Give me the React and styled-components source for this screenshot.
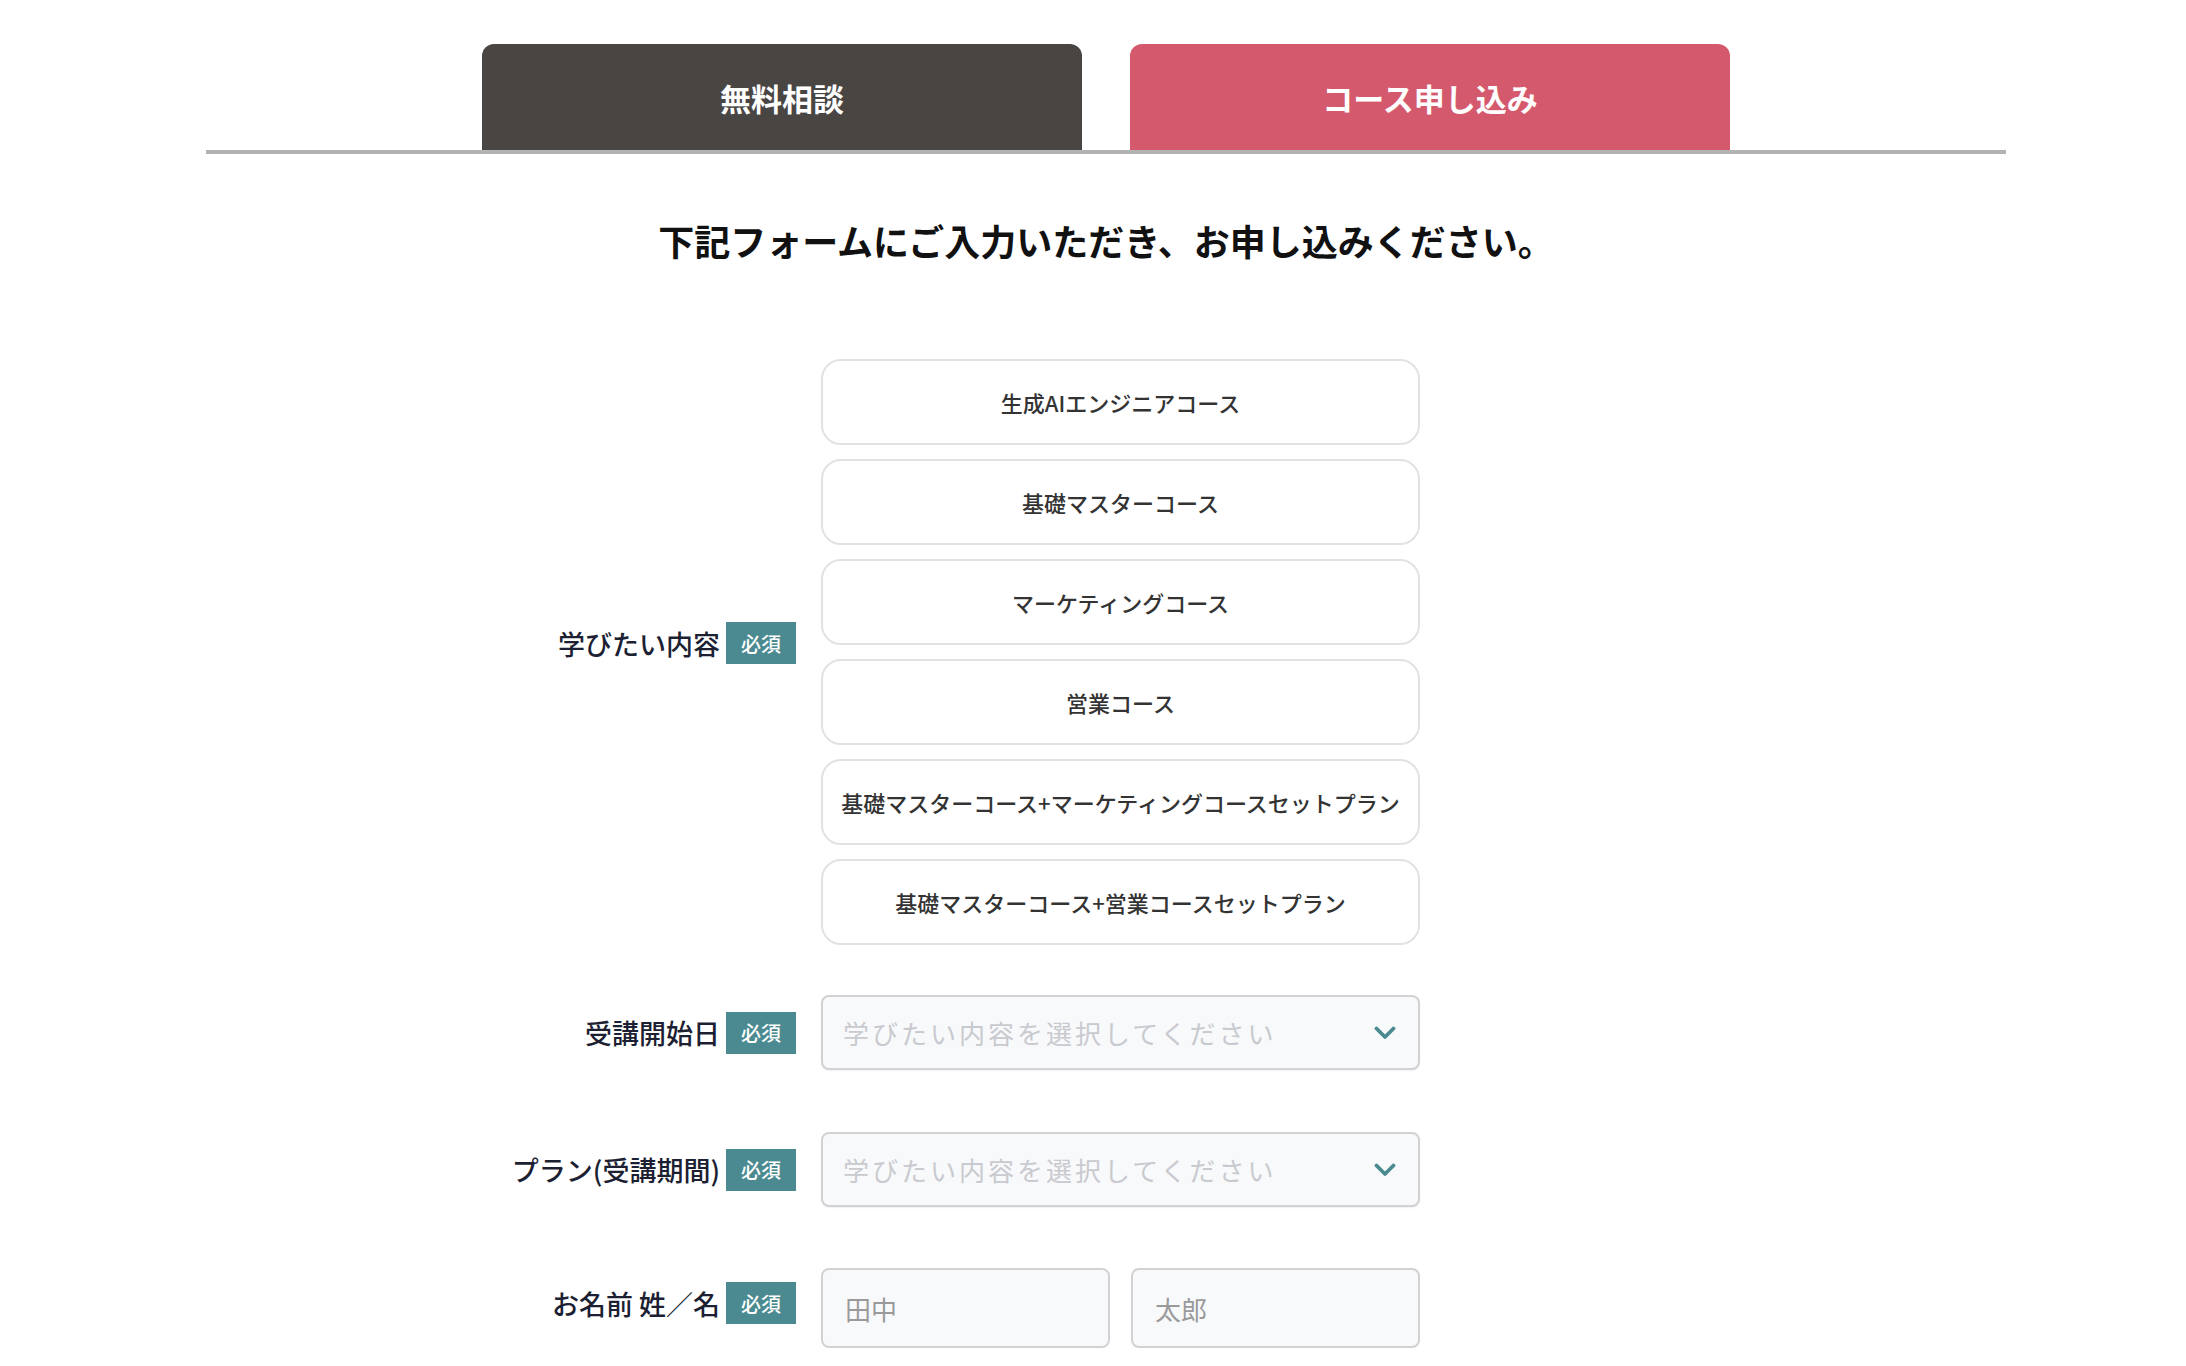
import React, { useState } from "react";
import styled, { createGlobalStyle } from "styled-components";

const GlobalStyle = createGlobalStyle`
  body {
    margin: 0;
    background: #ffffff;
    font-family: "Noto Sans CJK JP", "Noto Sans", sans-serif;
  }
`;

const Page = styled.div`
  padding-top: 44px;
  padding-bottom: 60px;
`;

const Container = styled.div`
  width: 1800px;
  margin-left: 206px;
`;

const TabBar = styled.nav`
  display: flex;
  justify-content: center;
  gap: 48px;
  border-bottom: 4px solid #b3b3b3;
`;

const Tab = styled.button`
  width: 600px;
  height: 106px;
  border: none;
  border-radius: 12px 12px 0 0;
  background: ${(props) => (props.active ? "#d5596d" : "#484543")};
  color: #ffffff;
  font-family: inherit;
  font-size: 31px;
  font-weight: 700;
  cursor: pointer;
`;

const Heading = styled.h2`
  margin: 62px 0 0;
  text-align: center;
  font-size: 36px;
  line-height: 49px;
  font-weight: 700;
  color: #111111;
`;

const Form = styled.form`
  display: grid;
  grid-template-columns: 590px 599px;
  column-gap: 25px;
  margin-top: 94px;
`;

const LabelCell = styled.div`
  display: flex;
  justify-content: flex-end;
  align-items: center;
  align-self: center;
  gap: 6px;
  margin-top: ${(props) => props.offset || 0}px;
  margin-bottom: ${(props) => props.lift || 0}px;
`;

const FieldCell = styled.div`
  margin-top: ${(props) => props.offset || 0}px;
`;

const LabelText = styled.span`
  font-size: 27px;
  font-weight: 500;
  color: #1d1f33;
  white-space: nowrap;
`;

const Badge = styled.span`
  display: inline-flex;
  align-items: center;
  justify-content: center;
  width: 70px;
  height: 42px;
  background: #4a8a90;
  color: #ffffff;
  font-size: 20px;
  font-weight: 500;
`;

const CourseList = styled.div`
  display: flex;
  flex-direction: column;
  gap: 14px;
`;

const CourseCard = styled.button`
  height: 86px;
  border: 2px solid ${(props) => (props.selected ? "#4a8a90" : "#e2e2e2")};
  border-radius: 20px;
  background: #ffffff;
  color: #333333;
  font-family: inherit;
  font-size: 22px;
  font-weight: 500;
  cursor: pointer;
`;

const SelectWrap = styled.div`
  position: relative;
`;

const Select = styled.select`
  width: 100%;
  height: 75px;
  padding: 0 60px 0 20px;
  border: 2px solid #d2d2d4;
  border-radius: 8px;
  background: #f8f9fb;
  color: #c9cacf;
  font-family: inherit;
  font-size: 26px;
  letter-spacing: 3px;
  appearance: none;
  box-shadow: 0 1px 2px rgba(0, 0, 0, 0.06);
  outline: none;
`;

const Chevron = styled.svg`
  position: absolute;
  right: 24px;
  top: 50%;
  transform: translateY(-50%);
  pointer-events: none;
`;

const NameRow = styled.div`
  display: grid;
  grid-template-columns: 1fr 1fr;
  gap: 21px;
`;

const TextInput = styled.input`
  box-sizing: border-box;
  width: 100%;
  height: 80px;
  padding: 0 22px;
  border: 2px solid #d2d2d4;
  border-radius: 8px;
  background: #f8f9fb;
  font-family: inherit;
  font-size: 26px;
  color: #333333;
  outline: none;
  &::placeholder {
    color: #9a9a9a;
  }
`;

const courses = [
  "生成AIエンジニアコース",
  "基礎マスターコース",
  "マーケティングコース",
  "営業コース",
  "基礎マスターコース+マーケティングコースセットプラン",
  "基礎マスターコース+営業コースセットプラン",
];

function Label({ children, offset, lift }) {
  return (
    <LabelCell offset={offset} lift={lift}>
      <LabelText>{children}</LabelText>
      <Badge>必須</Badge>
    </LabelCell>
  );
}

function PlaceholderSelect() {
  return (
    <SelectWrap>
      <Select defaultValue="">
        <option value="" disabled>
          学びたい内容を選択してください
        </option>
      </Select>
      <Chevron width="22" height="15" viewBox="0 0 22 15">
        <path d="M2.5 3l8.5 8.5L19.5 3" fill="none" stroke="#4a8a90" strokeWidth="3.8" strokeLinecap="round" strokeLinejoin="round" />
      </Chevron>
    </SelectWrap>
  );
}

function App() {
  const [tab, setTab] = useState("apply");
  const [course, setCourse] = useState(null);

  return (
    <Page>
      <GlobalStyle />
      <Container>
        <TabBar>
          <Tab active={tab === "free"} onClick={() => setTab("free")}>
            無料相談
          </Tab>
          <Tab active={tab === "apply"} onClick={() => setTab("apply")}>
            コース申し込み
          </Tab>
        </TabBar>
        <Heading>下記フォームにご入力いただき、お申し込みください。</Heading>
        <Form onSubmit={(e) => e.preventDefault()}>
          <Label lift={18}>学びたい内容</Label>
          <FieldCell>
            <CourseList>
              {courses.map((c) => (
                <CourseCard type="button" key={c} selected={course === c} onClick={() => setCourse(c)}>
                  {c}
                </CourseCard>
              ))}
            </CourseList>
          </FieldCell>

          <Label offset={50}>受講開始日</Label>
          <FieldCell offset={50}>
            <PlaceholderSelect />
          </FieldCell>

          <Label offset={62}>プラン(受講期間)</Label>
          <FieldCell offset={62}>
            <PlaceholderSelect />
          </FieldCell>

          <Label offset={61} lift={10}>お名前 姓／名</Label>
          <FieldCell offset={61}>
            <NameRow>
              <TextInput type="text" placeholder="田中" />
              <TextInput type="text" placeholder="太郎" />
            </NameRow>
          </FieldCell>
        </Form>
      </Container>
    </Page>
  );
}

export default App;
